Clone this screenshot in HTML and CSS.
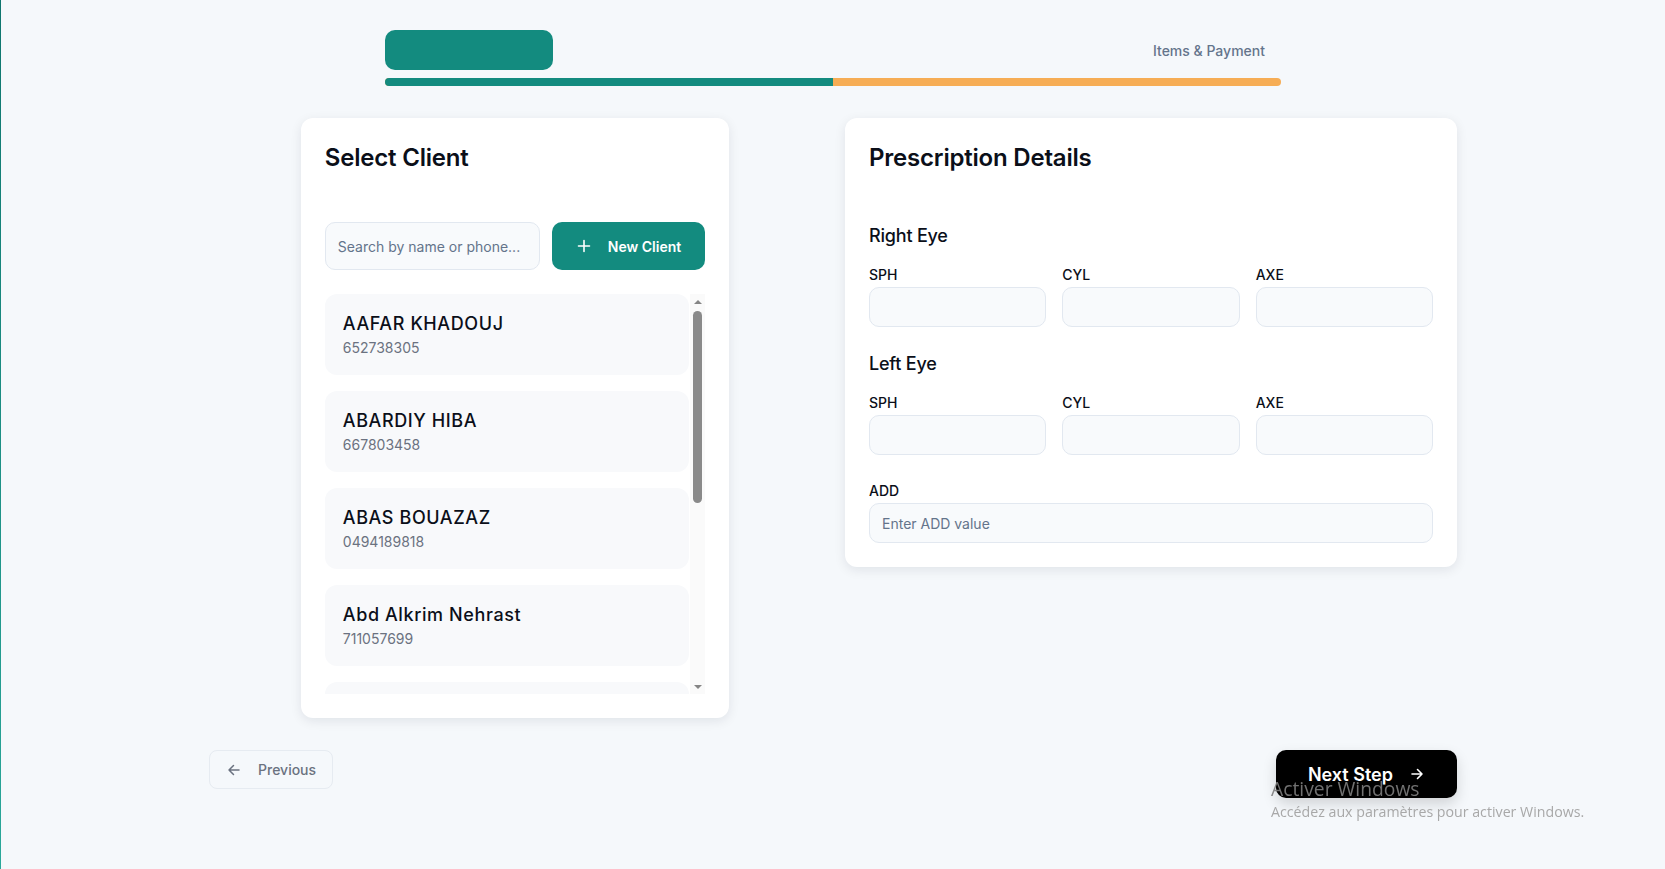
FILE: index.html
```html
<!DOCTYPE html>
<html lang="en">
<head>
<meta charset="utf-8">
<title>New Order</title>
<link rel="stylesheet" href="styles.css">
</head>
<body>
<div class="page">
  <div class="steps">
    <div class="step-row">
      <div class="step-active"></div>
      <div class="step-next">Items &amp; Payment</div>
    </div>
    <div class="progress"><div class="progress-fill"></div></div>
  </div>

  <div class="main">
    <div class="grid">
      <section class="card client-card">
        <h2 class="card-title">Select Client</h2>
        <div class="search-row">
          <input class="search" type="text" placeholder="Search by name or phone...">
          <button class="btn-new">
            <svg width="16" height="16" viewBox="0 0 16 16" fill="none" stroke="currentColor" stroke-width="1.6" stroke-linecap="round"><path d="M8 2.5v11M2.5 8h11"/></svg>
            <span>New Client</span>
          </button>
        </div>
        <div class="list-wrap">
          <div class="list">
            <div class="item"><div class="name">AAFAR KHADOUJ</div><div class="phone">652738305</div></div>
            <div class="item"><div class="name">ABARDIY HIBA</div><div class="phone">667803458</div></div>
            <div class="item"><div class="name">ABAS BOUAZAZ</div><div class="phone">0494189818</div></div>
            <div class="item"><div class="name">Abd Alkrim Nehrast</div><div class="phone">711057699</div></div>
            <div class="item"><div class="name">ABDELAZIZ BENNANI</div><div class="phone">661245870</div></div>
            <div class="item"><div class="name">Abdelhak Mounir</div><div class="phone">0612784593</div></div>
            <div class="item"><div class="name">ABDELLAH KARIMI</div><div class="phone">698453217</div></div>
            <div class="item"><div class="name">Abderrahim Saidi</div><div class="phone">0707352816</div></div>
          </div>
          <div class="scrollbar" aria-hidden="true">
            <span class="sb-btn"><span class="sb-up"></span></span>
            <span class="sb-thumb"></span>
            <span class="sb-space"></span>
            <span class="sb-btn"><span class="sb-down"></span></span>
          </div>
        </div>
      </section>

      <section class="card rx-card">
        <h2 class="card-title">Prescription Details</h2>
        <div class="eye">
          <h3 class="eye-title">Right Eye</h3>
          <div class="fields">
            <label class="field"><span class="label">SPH</span><input class="input" type="text"></label>
            <label class="field"><span class="label">CYL</span><input class="input" type="text"></label>
            <label class="field"><span class="label">AXE</span><input class="input" type="text"></label>
          </div>
        </div>
        <div class="eye eye-left">
          <h3 class="eye-title">Left Eye</h3>
          <div class="fields">
            <label class="field"><span class="label">SPH</span><input class="input" type="text"></label>
            <label class="field"><span class="label">CYL</span><input class="input" type="text"></label>
            <label class="field"><span class="label">AXE</span><input class="input" type="text"></label>
          </div>
        </div>
        <label class="field add-field"><span class="label">ADD</span><input class="input input-text" type="text" placeholder="Enter ADD value"></label>
      </section>
    </div>

    <div class="footer">
      <button class="btn-prev">
        <svg width="16" height="16" viewBox="0 0 16 16" fill="none" stroke="currentColor" stroke-width="1.5" stroke-linecap="round" stroke-linejoin="round"><path d="M13 8H3M7.5 3.5L3 8l4.5 4.5"/></svg>
        <span>Previous</span>
      </button>
      <button class="btn-next">
        <span>Next Step</span>
        <svg width="16" height="16" viewBox="0 0 16 16" fill="none" stroke="currentColor" stroke-width="1.6" stroke-linecap="round" stroke-linejoin="round"><path d="M3 8h10M8.5 3.5L13 8l-4.5 4.5"/></svg>
      </button>
    </div>
  </div>
</div>

<div class="watermark">
  <div class="wm-title">Activer Windows</div>
  <div class="wm-sub">Accédez aux paramètres pour activer Windows.</div>
</div>
</body>
</html>
```

FILE: styles.css
```css
* { box-sizing: border-box; }

html, body { height: 100%; }

body {
  margin: 0;
  background: #f5f8fb;
  font-family: Inter, "Noto Sans", "Liberation Sans", sans-serif;
  color: #0b0f19;
  border-left: 1px solid #0f766e;
  border-image: linear-gradient(to bottom, #0f766e, #2aa89a) 1;
  min-height: 100vh;
}

.page {
  padding-top: 30px;
}

/* steps */
.steps {
  width: 896px;
  margin: 0 auto;
}

.step-row {
  display: flex;
  justify-content: space-between;
  align-items: center;
}

.step-active {
  width: 168px;
  height: 40px;
  background: #138b7f;
  border-radius: 10px;
}

.step-next {
  padding: 0 16px;
  font-size: 14px;
  font-weight: 500;
  color: #64748b;
}

.progress {
  margin-top: 8px;
  height: 8px;
  border-radius: 999px;
  background: #f6ad55;
  overflow: hidden;
}

.progress-fill {
  width: 50%;
  height: 100%;
  background: #138b7f;
}

/* main */
.main {
  width: 1248px;
  margin: 32px auto 0;
}

.grid {
  display: grid;
  grid-template-columns: 1fr 1fr;
  gap: 24px;
  align-items: start;
}

.card {
  background: #ffffff;
  border-radius: 12px;
  box-shadow: 0 3px 12px rgba(15, 23, 42, 0.09);
  padding: 24px;
}

.client-card {
  width: 70%;
  justify-self: center;
}

.card-title {
  margin: 0 0 48px;
  font-size: 24px;
  line-height: 32px;
  font-weight: 600;
  letter-spacing: -0.2px;
  color: #0b0f19;
}

.search-row {
  display: flex;
  gap: 12px;
  height: 48px;
}

.search {
  flex: 1;
  min-width: 0;
  height: 48px;
  background: #f8fafc;
  border: 1px solid #e2e8f0;
  border-radius: 10px;
  padding: 0 12px;
  font-family: inherit;
  font-size: 14px;
  color: #0b0f19;
  outline: none;
}

.search::placeholder,
.input-text::placeholder {
  color: #64748b;
}

.btn-new {
  display: flex;
  align-items: center;
  gap: 16px;
  height: 48px;
  padding: 0 24px;
  background: #138b7f;
  color: #ffffff;
  border: none;
  border-radius: 10px;
  font-family: inherit;
  font-size: 14px;
  font-weight: 600;
  cursor: pointer;
}

/* client list with its scrollbar */
.list-wrap {
  margin-top: 24px;
  height: 400px;
  display: flex;
  gap: 1px;
}

.list {
  flex: 1;
  min-width: 0;
  height: 100%;
  overflow-y: auto;
  scrollbar-width: none;
}

.list::-webkit-scrollbar {
  display: none;
}

.item {
  background: #f8f9fb;
  border-radius: 12px;
  padding: 16px 18px 17px;
}

.item + .item {
  margin-top: 16px;
}

.name {
  font-size: 18px;
  line-height: 28px;
  font-weight: 500;
  color: #0b0f19;
  letter-spacing: 0.6px;
}

.phone {
  font-size: 14px;
  line-height: 20px;
  color: #6b7280;
}

.scrollbar {
  width: 15px;
  flex: none;
  display: flex;
  flex-direction: column;
  background: #fafafa;
}

.sb-btn {
  height: 15px;
  flex: none;
  display: flex;
  align-items: center;
  justify-content: center;
}

.sb-up,
.sb-down {
  width: 0;
  height: 0;
  border-left: 4px solid transparent;
  border-right: 4px solid transparent;
}

.sb-up {
  border-bottom: 4px solid #858585;
}

.sb-down {
  border-top: 4px solid #858585;
}

.sb-thumb {
  flex: none;
  height: 192px;
  margin: 2px 3px 0;
  border-radius: 5px;
  background: #8a8a8a;
}

.sb-space {
  flex: 1;
}

/* prescription */
.eye-title {
  margin: 0 0 15px;
  font-size: 18px;
  line-height: 28px;
  font-weight: 500;
  letter-spacing: -0.2px;
  color: #0b0f19;
}

.eye-left {
  margin-top: 23px;
}

.fields {
  display: grid;
  grid-template-columns: repeat(3, 1fr);
  gap: 16px;
}

.field {
  display: flex;
  flex-direction: column;
}

.label {
  font-size: 14px;
  line-height: 20px;
  font-weight: 500;
  color: #0b0f19;
  margin-bottom: 2px;
}

.input {
  width: 100%;
  height: 40px;
  background: #f8fafc;
  border: 1px solid #e2e8f0;
  border-radius: 10px;
  padding: 0 12px;
  font-family: inherit;
  font-size: 14px;
  color: #0b0f19;
  outline: none;
}

.add-field {
  margin-top: 26px;
}

/* footer */
.footer {
  margin-top: 32px;
  display: flex;
  justify-content: space-between;
  align-items: flex-start;
}

.btn-prev {
  display: flex;
  align-items: center;
  gap: 16px;
  padding: 9px 16px;
  line-height: 19px;
  background: transparent;
  border: 1px solid #e6ebf1;
  border-radius: 8px;
  color: #6b7280;
  font-family: inherit;
  font-size: 14px;
  font-weight: 500;
  cursor: pointer;
}

.btn-next {
  display: flex;
  align-items: center;
  gap: 16px;
  height: 48px;
  padding: 0 32px;
  background: #000000;
  color: #ffffff;
  border: none;
  border-radius: 10px;
  font-family: inherit;
  font-size: 18px;
  font-weight: 600;
  box-shadow: 0 6px 14px rgba(0, 0, 0, 0.15);
  cursor: pointer;
}

/* OS watermark overlay */
.watermark {
  position: fixed;
  left: 1271px;
  top: 776px;
  pointer-events: none;
  font-family: "Open Sans", "Noto Sans", sans-serif;
}

.wm-title {
  font-size: 19.3px;
  line-height: 26px;
  color: rgba(125, 125, 125, 0.9);
}

.wm-sub {
  font-size: 14.2px;
  line-height: 20px;
  color: #a8a8a8;
}
```
